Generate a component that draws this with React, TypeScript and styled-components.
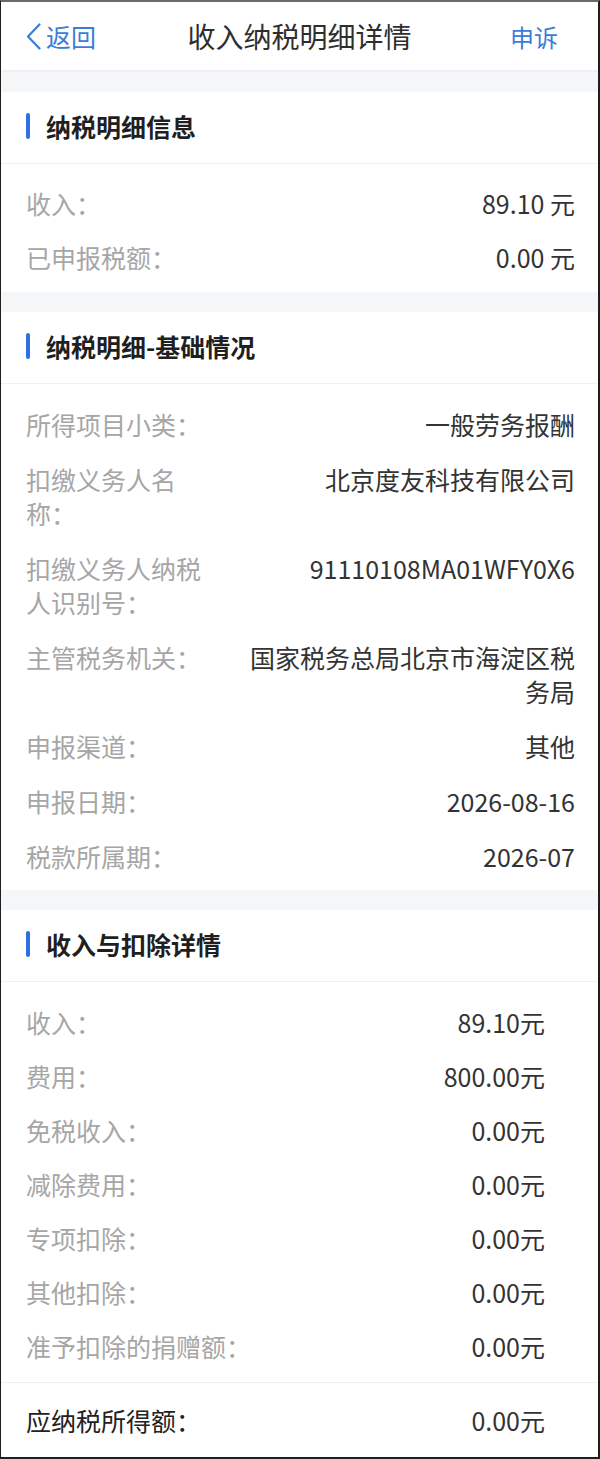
import React from "react";
import styled, { createGlobalStyle } from "styled-components";

const GlobalStyle = createGlobalStyle`
  html, body {
    margin: 0;
    padding: 0;
    background: #fff;
  }
  body {
    font-family: "Noto Sans CJK SC", "Noto Sans", sans-serif;
  }
`;

const Frame = styled.div`
  box-sizing: border-box;
  width: 600px;
  height: 1459px;
  overflow: hidden;
  background: #fff;
  border-top: 2px solid #6a6a6a;
  border-left: 1px solid #1e1e1e;
  border-right: 2px solid #1e1e1e;
  border-bottom: 2px solid #1e1e1e;
`;

const NavBar = styled.div`
  box-sizing: border-box;
  height: 70px;
  display: grid;
  grid-template-columns: 1fr auto 1fr;
  align-items: center;
  padding: 0 25px;
  border-bottom: 2px solid #eef0f3;
`;

const BackLink = styled.div`
  display: flex;
  align-items: center;
  gap: 5px;
  color: #3b7cd8;
  font-size: 25px;
`;

const NavTitle = styled.div`
  font-size: 28px;
  color: #2e2e2e;
`;

const NavAction = styled.div`
  justify-self: end;
  padding-right: 15px;
  color: #3b7cd8;
  font-size: 24px;
`;

const Band = styled.div`
  height: 20px;
  background: #f5f6f8;
`;

const SectionHead = styled.div`
  box-sizing: border-box;
  height: 72px;
  display: flex;
  align-items: center;
  gap: 16px;
  padding: 0 25px 4px;
  border-bottom: 1px solid #f0f1f3;
`;

const Marker = styled.span`
  width: 4px;
  height: 26px;
  border-radius: 2px;
  background: #2f6fe4;
`;

const SectionTitle = styled.div`
  font-size: 25px;
  font-weight: 700;
  color: #1f1f1f;
`;

const List = styled.div<{ $top: number; $bottom: number; $right: number }>`
  padding: ${(p) => p.$top}px ${(p) => p.$right}px ${(p) => p.$bottom}px 25px;
`;

const Row = styled.div<{ $pad?: number }>`
  display: flex;
  align-items: flex-start;
  gap: 40px;
  padding: ${(p) => p.$pad ?? 10}px 0;
  font-size: 25px;
  line-height: 34px;
`;

const Label = styled.div<{ $max?: number; $strong?: boolean }>`
  flex: 0 1 auto;
  max-width: ${(p) => (p.$max ? `${p.$max}px` : "none")};
  color: ${(p) => (p.$strong ? "#222" : "#a6a6a6")};
`;

const Value = styled.div`
  flex: 1;
  min-width: 0;
  text-align: right;
  color: #333;
`;

const TotalRow = styled(Row)`
  border-top: 1px solid #f0f1f3;
  padding: 20px 53px 0 25px;
`;

const Chevron = () => (
  <svg width="15" height="27" viewBox="0 0 15 27" fill="none">
    <polyline
      points="13.5,1.5 2,13.5 13.5,25.5"
      stroke="#3b7cd8"
      strokeWidth="2.2"
      strokeLinecap="round"
      strokeLinejoin="round"
    />
  </svg>
);

type Item = { label: string; value: string; max?: number };

const info: Item[] = [
  { label: "收入：", value: "89.10 元" },
  { label: "已申报税额：", value: "0.00 元" },
];

const basic: Item[] = [
  { label: "所得项目小类：", value: "一般劳务报酬" },
  { label: "扣缴义务人名称：", value: "北京度友科技有限公司", max: 155 },
  { label: "扣缴义务人纳税人识别号：", value: "91110108MA01WFY0X6", max: 180 },
  { label: "主管税务机关：", value: "国家税务总局北京市海淀区税务局" },
  { label: "申报渠道：", value: "其他" },
  { label: "申报日期：", value: "2026-08-16" },
  { label: "税款所属期：", value: "2026-07" },
];

const deduct: Item[] = [
  { label: "收入：", value: "89.10元" },
  { label: "费用：", value: "800.00元" },
  { label: "免税收入：", value: "0.00元" },
  { label: "减除费用：", value: "0.00元" },
  { label: "专项扣除：", value: "0.00元" },
  { label: "其他扣除：", value: "0.00元" },
  { label: "准予扣除的捐赠额：", value: "0.00元" },
];

const Section: React.FC<{ title: string }> = ({ title }) => (
  <SectionHead>
    <Marker />
    <SectionTitle>{title}</SectionTitle>
  </SectionHead>
);

const renderRows = (items: Item[], pad?: number) =>
  items.map((it) => (
    <Row key={it.label} $pad={pad}>
      <Label $max={it.max}>{it.label}</Label>
      <Value>{it.value}</Value>
    </Row>
  ));

const App: React.FC = () => {
  return (
    <Frame>
      <GlobalStyle />
      <NavBar>
        <BackLink>
          <Chevron />
          返回
        </BackLink>
        <NavTitle>收入纳税明细详情</NavTitle>
        <NavAction>申诉</NavAction>
      </NavBar>
      <Band />

      <Section title="纳税明细信息" />
      <List $top={12} $bottom={8} $right={23}>
        {renderRows(info)}
      </List>
      <Band />

      <Section title="纳税明细-基础情况" />
      <List $top={12} $bottom={7} $right={23}>
        {renderRows(basic, 10.5)}
      </List>
      <Band />

      <Section title="收入与扣除详情" />
      <List $top={13} $bottom={9} $right={53}>
        {renderRows(deduct)}
      </List>
      <TotalRow>
        <Label $strong>应纳税所得额：</Label>
        <Value>0.00元</Value>
      </TotalRow>
    </Frame>
  );
};

export default App;
